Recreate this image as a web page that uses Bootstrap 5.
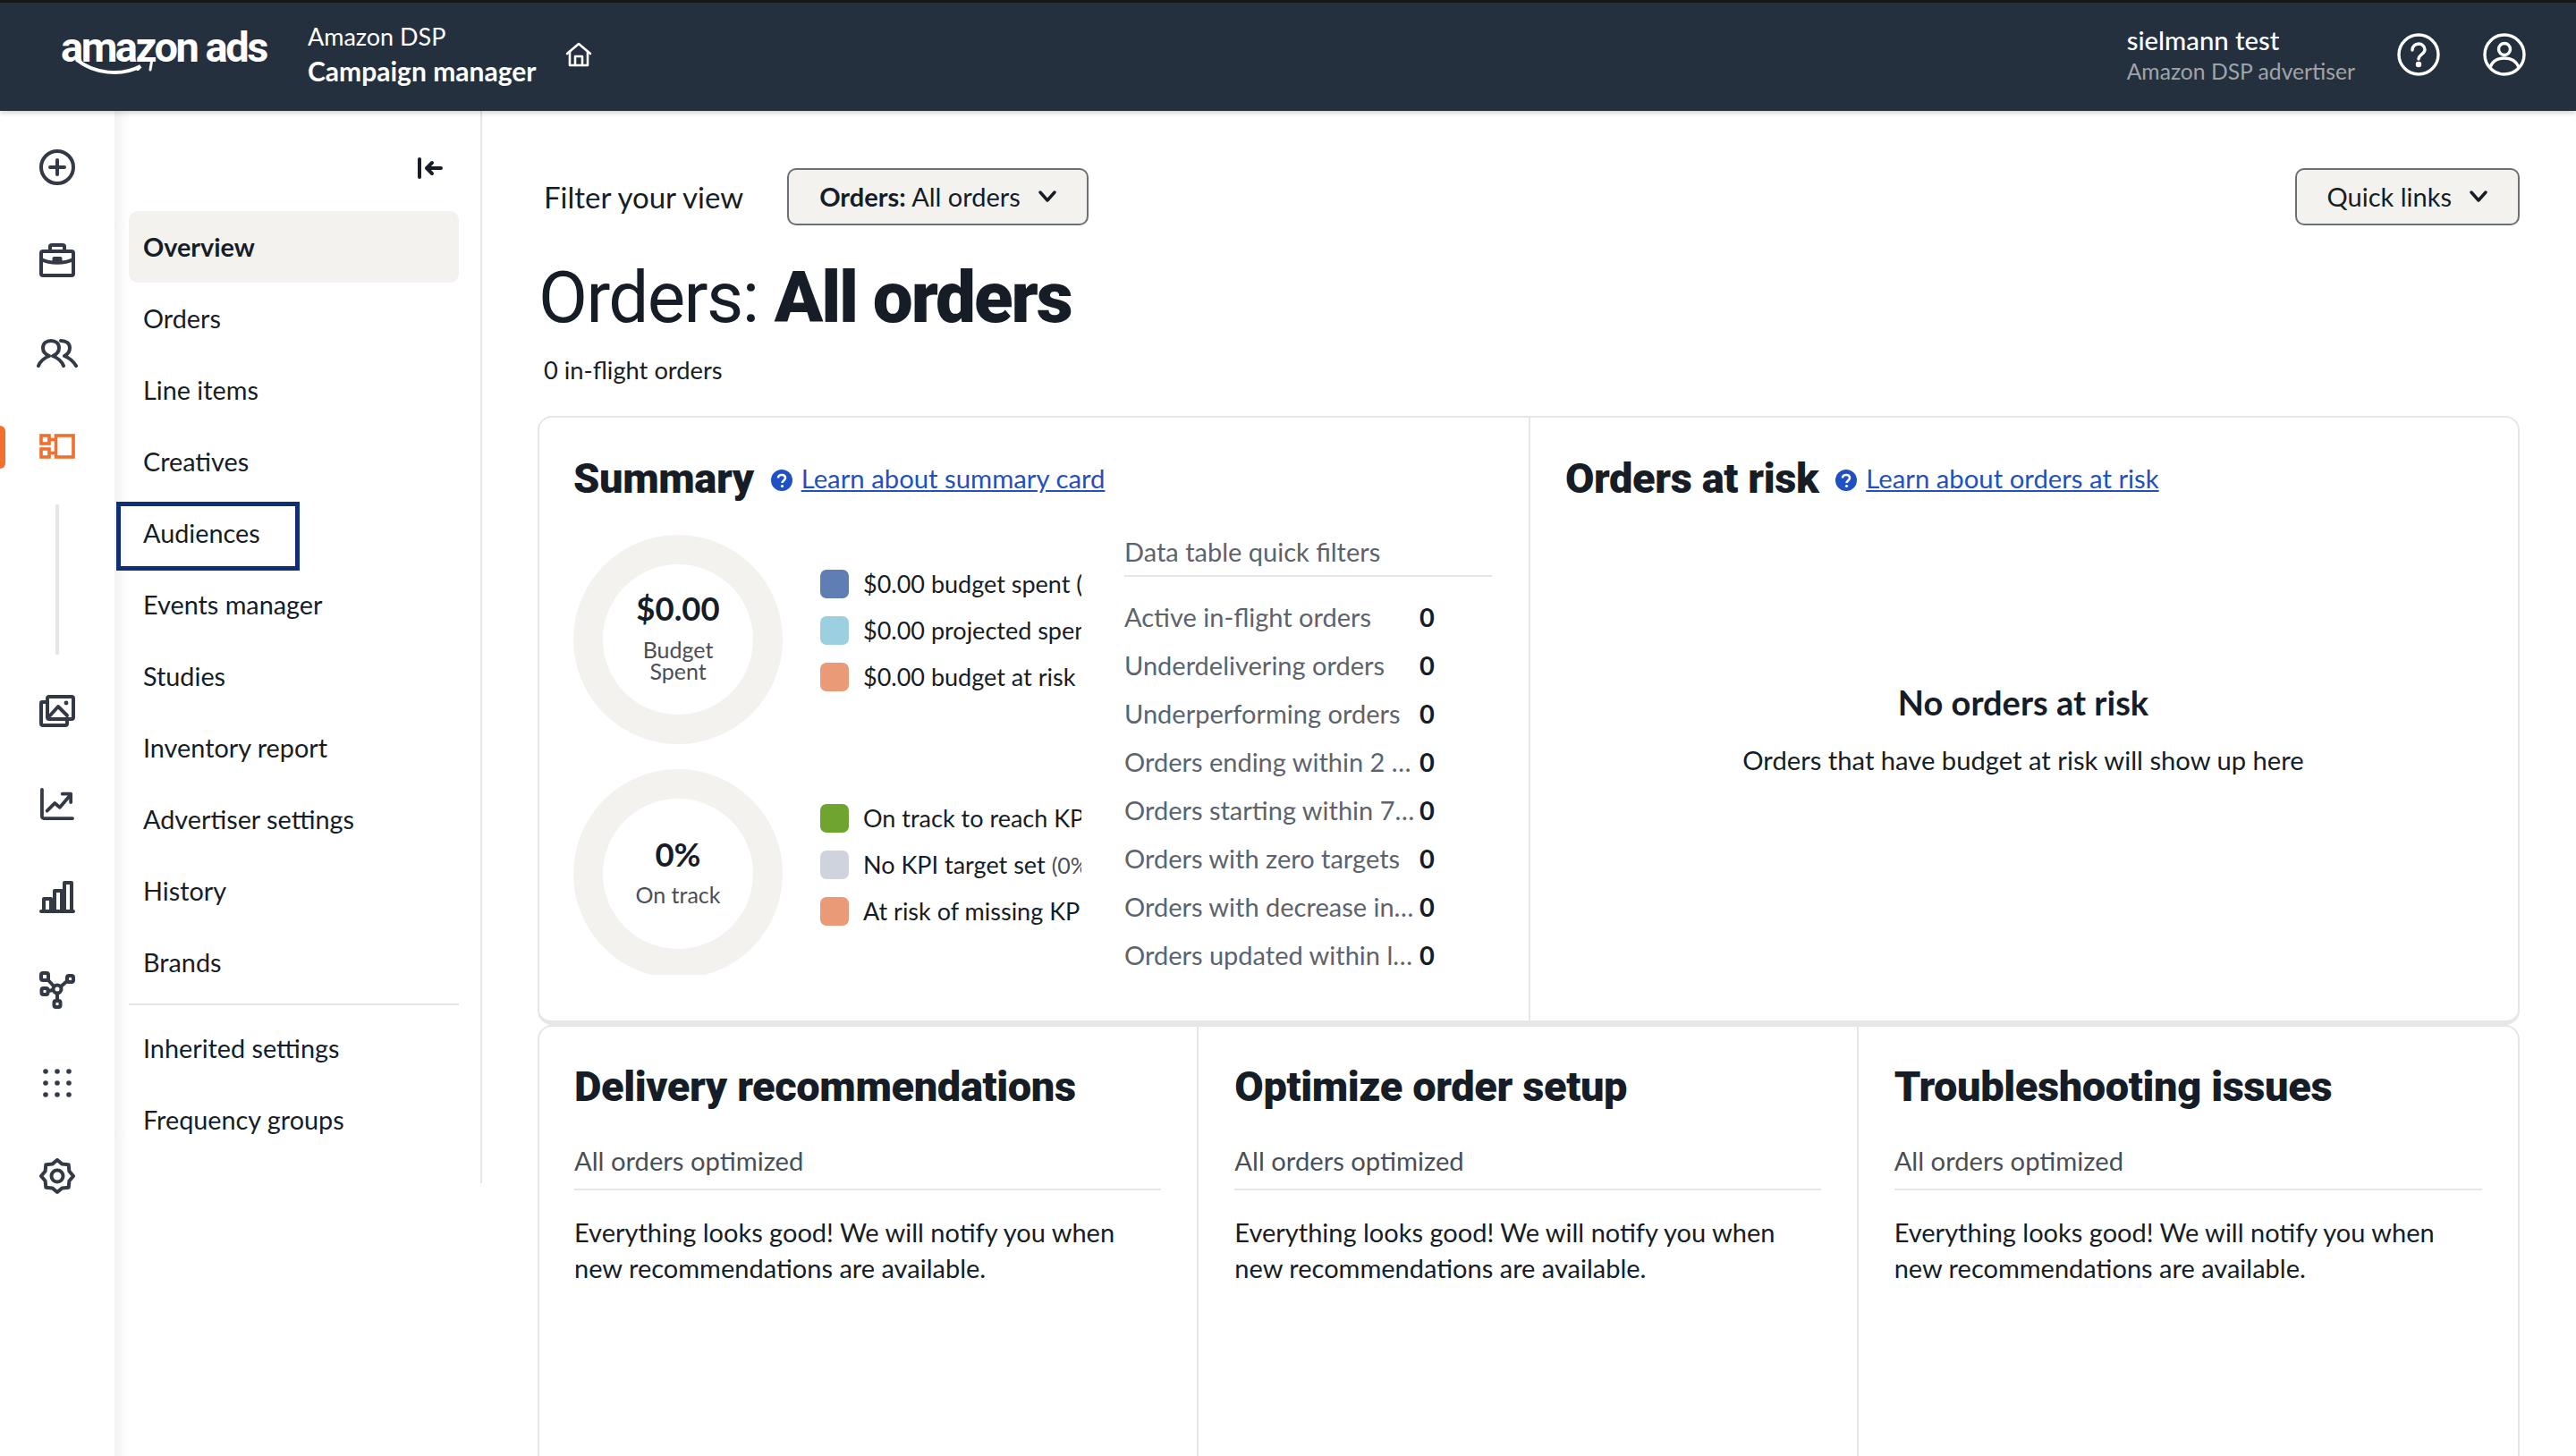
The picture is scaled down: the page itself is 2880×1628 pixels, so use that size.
<!DOCTYPE html>
<html lang="en">
<head>
<meta charset="utf-8">
<title>Campaign manager</title>
<link href="https://cdn.jsdelivr.net/npm/bootstrap@5.3.0/dist/css/bootstrap.min.css" rel="stylesheet">
<script src="https://cdn.jsdelivr.net/npm/bootstrap@5.3.0/dist/js/bootstrap.bundle.min.js"></script>
<style>
html,body{height:1628px;overflow:hidden}
body{font-family:"Lato","Noto Sans",sans-serif;font-size:29px;color:#161d26;background:#fff;line-height:36px}
.topbar{height:124px;background:#25303f;border-top:3px solid #161616;box-shadow:0 2px 6px rgba(0,0,0,.2);position:relative;z-index:3;padding:0 56px 0 68px}
.logo-box{width:231px;margin-top:-10px}
.logo-txt{font-family:"Roboto",sans-serif;font-weight:700;font-size:47px;line-height:46px;letter-spacing:-2.500px;color:#fff;white-space:nowrap;display:block}
.logo-smile{display:block;margin:-12px 0 0 17px}
.app-names{margin-left:45px;color:#fff;line-height:38px;font-size:27px;margin-top:-8px}
.app-names b{font-weight:700;display:block;font-size:30px}
.app-names span{display:block}
.home-ic{margin-left:33px;margin-top:-6px}
.acct{color:#fff;line-height:35px;margin-right:47px;margin-top:-4px}
.acct .nm{display:block;font-size:29.300px;font-weight:500}
.acct .rl{display:block;font-size:24.700px;color:#a0a4aa}
.top-ic{margin-top:-6px}
.shell{height:1504px}
.rail{width:128px;padding-top:11px;position:relative}
.rail-it{height:104px;display:flex;align-items:center;justify-content:center;position:relative}
.rail-act::before{content:"";position:absolute;left:0;top:29px;width:6px;height:48px;background:#f26f2d;border-radius:0 6px 6px 0}
.rail-line{width:4px;height:168px;background:#e6e6e6;margin:13px auto 11px}
.subnav{width:411px;height:1199px;border-right:2px solid #e6e6e6;position:relative;padding:52px 24px 0 16px}
.subnav-fade{background:linear-gradient(90deg,#f2f2f2 0,#fff 16px);width:20px;height:1504px;position:absolute;left:0;top:0}
.coll{height:60px;display:flex;justify-content:flex-end;padding-right:18px;position:relative}
.snav-link{height:80px;display:flex;align-items:center;padding:0 16px;color:#161d26;text-decoration:none;font-size:28.800px;position:relative;border-radius:10px}
.snav-on{background:#f3f2ef;font-weight:700}
.snav-focus::after{content:"";position:absolute;left:-14px;top:5px;width:205px;height:77px;border:5px solid #0f2f75}
.snav-sep{height:2px;background:#e6e6e6;margin:6px 0 8px}
.mainp{padding:64px 63px 0 62px;min-width:0}
.filt-row{padding-left:7px;height:64px}
.filt-lbl{font-size:33px;margin-right:49px}
.dd-btn{height:64px;background:#f3f2ef;border:2px solid #6c6f75;border-radius:10px;color:#161d26;font-size:29px;padding:0 34px 2px;display:flex;align-items:center;gap:20px;line-height:1}
.dd-btn:hover{background:#f3f2ef;color:#161d26;border-color:#6c6f75}
.dd-btn b{font-weight:700}
.pg-title{font-family:"Roboto",sans-serif;font-size:80px;line-height:96px;margin:33px 0 0 1px;font-weight:400;letter-spacing:-1.600px;color:#161d26}
.pg-title b{font-weight:900;letter-spacing:-2.100px}
.pg-sub{margin:15px 0 0 7px;font-size:27.300px}
.panel{border:2px solid #e6e6e6;border-radius:16px;background:#fff}
.panel-a{margin-top:33px;height:681px;border-bottom-width:5px}
.pa-left{width:1108px;border-right:2px solid #e6e6e6;padding:40px 0 0 38px}
.pa-right{padding:40px 0 0 39px}
.sec-h{font-family:"Roboto",sans-serif;font-weight:900;font-size:47px;line-height:56px;letter-spacing:-.4px;margin:0;color:#161d26}
.lnk{color:#1f50c4;font-size:29.300px;text-decoration:underline;margin-left:10px}
.help-b{margin-left:19px;margin-top:3px}
.mx{margin-top:35px;gap:0}
.charts{width:569px}
.chart-row{height:234px;margin-bottom:28px;overflow:hidden;gap:42px}
.chart-row:last-child{height:230px;margin-bottom:0}
.donut{width:234px;height:234px;flex:none;border-radius:50%;border:33px solid #f3f2ef;display:flex;flex-direction:column;align-items:center;text-align:center}
.dn-val{font-weight:700;font-size:36.500px;line-height:44px;margin-top:27px}
.dn-sub{font-size:25px;line-height:24px;color:#4a4f57;margin-top:12px}
.dn-mid{margin-top:40px}
.dn-sub2{margin-top:11px}
.legend{width:292px;margin-top:39px;overflow:hidden}
.lg-it{height:32px;margin-bottom:20px;display:flex;align-items:center;gap:16px;white-space:nowrap;font-size:27px}
.sw{width:32px;height:32px;flex:none;border-radius:7px}
.lg-it small{font-size:25px;color:#4a4f57}
.qf{width:411px;margin-left:47px}
.qf-h{color:#5d636b;height:47px;line-height:38px;border-bottom:2px solid #e6e6e6;margin-bottom:18px;font-size:29px}
.qf-r{height:54px;display:flex;align-items:center;color:#5d636b;font-size:29px}
.qf-l{width:330px;flex:none;white-space:nowrap;overflow:hidden;text-overflow:ellipsis}
.qf-v{color:#161d26;font-weight:700}
.empty{margin-top:202px;text-align:center;padding-right:41px}
.empty h3{font-size:38px;line-height:40px;font-weight:700;margin:0}
.empty p{margin:27px 0 0;font-size:29.200px}
.panel-b{height:600px}
.pb-c{padding:39px 40px 0 40px;border-right:2px solid #e6e6e6}
.pb-c:first-child{padding-left:39px}
.pb-c:last-child{border-right:0}
.pb-sub{margin-top:37px;color:#4a4f57;padding-bottom:13px;border-bottom:2px solid #e6e6e6;font-size:29.200px}
.pb-txt{margin-top:27px;line-height:40px;font-size:29px;padding-right:10px}
</style>
</head>
<body>
<header class="topbar d-flex align-items-center">
  <div class="logo-box">
    <span class="logo-txt">amazon ads</span>
    <svg class="logo-smile" width="88" height="24" viewBox="0 0 88 24"><path d="M1 3C20 18 50 22 72 10L69 13" fill="none" stroke="#fff" stroke-width="4" stroke-linecap="round"/><path d="M74 3L85 2L83 14" fill="none" stroke="#fff" stroke-width="3" stroke-linecap="round"/></svg>
  </div>
  <div class="app-names"><span>Amazon DSP</span><b>Campaign manager</b></div>
  <svg class="home-ic" width="30" height="28" viewBox="0 0 30 28" fill="none" stroke="#fff" stroke-width="2.600" stroke-linejoin="round" stroke-linecap="round"><path d="M2 13L15 2L28 13"/><path d="M5 11V26H25V11"/><path d="M11 26V16H19V26"/></svg>
  <div class="ms-auto acct"><span class="nm">sielmann test</span><span class="rl">Amazon DSP advertiser</span></div>
  <svg class="top-ic" width="48" height="48" viewBox="0 0 48 48" fill="none" stroke="#fff" stroke-width="3.400" stroke-linecap="round"><circle cx="24" cy="24" r="22"/><path d="M17 19c0-4 3-7 7-7s7 3 7 6.500c0 5-7 5.500-7 10.500"/><circle cx="24" cy="35" r="1.500" fill="#fff"/></svg>
  <svg class="top-ic ms-5" width="48" height="48" viewBox="0 0 48 48" fill="none" stroke="#fff" stroke-width="3.400"><circle cx="24" cy="24" r="22"/><circle cx="24" cy="18" r="6.500"/><path d="M8 38c3-7 9-10 16-10s13 3 16 10"/></svg>
</header>

<div class="shell d-flex">
  <nav class="rail flex-shrink-0">
    <div class="rail-it"><svg width="40" height="40" viewBox="0 0 40 40" fill="none" stroke="#343a45" stroke-width="4" stroke-linecap="round"><circle cx="20" cy="20" r="18"/><path d="M20 12V28M12 20H28"/></svg></div>
    <div class="rail-it"><svg width="40" height="38" viewBox="0 0 40 38" fill="none" stroke="#343a45" stroke-width="4" stroke-linejoin="round"><rect x="2" y="9" width="36" height="27" rx="2"/><path d="M12 9V3.500C12 2.500 13 2 14 2H26C27 2 28 2.500 28 3.500V9"/><path d="M2 18C12 23 28 23 38 18"/><rect x="16.500" y="17" width="7" height="3" fill="#343a45"/></svg></div>
    <div class="rail-it"><svg width="46" height="32" viewBox="0 0 46 32" fill="none" stroke="#343a45" stroke-width="4" stroke-linecap="round" stroke-linejoin="round"><path d="M14 19C9 17 7 14 7 10C7 5 11 2 16 2S25 5 25 10C25 14 23 17 18 19C23 21 28 25 30 30M14 19C9 21 4 25 2 30"/><path d="M27 2C33 2 37 5 37 10C37 14 35 17 31 19C36 21 41 25 44 30"/></svg></div>
    <div class="rail-it rail-act"><svg width="40" height="28" viewBox="0 0 40 28" fill="none" stroke="#f26f2d" stroke-width="3.600"><rect x="2" y="2" width="9" height="9"/><rect x="2" y="17" width="9" height="9"/><rect x="18.500" y="2" width="19.500" height="24"/><path d="M11 6.500H18.500M11 21.500H18.500"/></svg></div>
    <div class="rail-line"></div>
    <div class="rail-it"><svg width="40" height="36" viewBox="0 0 40 36" fill="none" stroke="#343a45" stroke-width="4" stroke-linejoin="round" stroke-linecap="round"><rect x="9" y="2" width="29" height="25" rx="2"/><path d="M9 8H3C2.500 8 2 8.500 2 9V32C2 33.500 2.500 34 4 34H29C30 34 31 33.500 31 32V27"/><path d="M12 23L21 13L31 23"/><circle cx="30" cy="9" r="2.400" fill="#343a45" stroke="none"/></svg></div>
    <div class="rail-it"><svg width="40" height="36" viewBox="0 0 40 38" fill="none" stroke="#343a45" stroke-width="4" stroke-linejoin="round" stroke-linecap="round"><path d="M2 2V34C2 35 3 36 4 36H38"/><path d="M8 27L17 18L23 23L35 9"/><path d="M26 7H36V17"/></svg></div>
    <div class="rail-it"><svg width="40" height="36" viewBox="0 0 40 36" fill="none" stroke="#343a45" stroke-width="4" stroke-linejoin="round" stroke-linecap="round"><path d="M2 34H38"/><rect x="5" y="20" width="8" height="14"/><rect x="17" y="11" width="8" height="23"/><rect x="28" y="2" width="8" height="32"/></svg></div>
    <div class="rail-it"><svg width="40" height="42" viewBox="0 0 40 42" fill="none" stroke="#343a45" stroke-width="4" stroke-linejoin="round"><rect x="2" y="2" width="8" height="8" rx="2"/><rect x="31" y="5" width="7" height="7" rx="2"/><rect x="2.500" y="19" width="7" height="7" rx="2"/><rect x="16.500" y="33" width="7" height="7" rx="2"/><circle cx="20" cy="20" r="4.500"/><path d="M9 9L16.500 17M31 11L24 17M10 22L15.500 21M20 25V33"/></svg></div>
    <div class="rail-it"><svg width="32" height="32" viewBox="0 0 32 32" fill="#343a45"><circle cx="3" cy="3" r="2.800"/><circle cx="16" cy="3" r="2.800"/><circle cx="29" cy="3" r="2.800"/><circle cx="3" cy="16" r="2.800"/><circle cx="16" cy="16" r="2.800"/><circle cx="29" cy="16" r="2.800"/><circle cx="3" cy="29" r="2.800"/><circle cx="16" cy="29" r="2.800"/><circle cx="29" cy="29" r="2.800"/></svg></div>
    <div class="rail-it"><svg width="40" height="40" viewBox="0 0 40 40" fill="none" stroke="#343a45" stroke-width="4" stroke-linejoin="round"><polygon points="38,20 33.400,25.550 32.700,32.700 25.550,33.400 20,38 14.450,33.400 7.300,32.700 6.600,25.550 2,20 6.600,14.450 7.300,7.300 14.450,6.600 20,2 25.550,6.600 32.700,7.300 33.400,14.450"/><circle cx="20" cy="20" r="6.500"/></svg></div>
  </nav>

  <aside class="subnav flex-shrink-0">
    <div class="subnav-fade"></div>
    <div class="coll"><svg width="28" height="24" viewBox="0 0 28 24" fill="none" stroke="#161d26" stroke-width="4" stroke-linecap="round" stroke-linejoin="round"><path d="M2 2V22"/><path d="M26 12H10M16 6L10 12L16 18"/></svg></div>
    <div class="d-flex flex-column position-relative">
      <a class="snav-link snav-on" href="#">Overview</a>
      <a class="snav-link" href="#">Orders</a>
      <a class="snav-link" href="#">Line items</a>
      <a class="snav-link" href="#">Creatives</a>
      <a class="snav-link snav-focus" href="#">Audiences</a>
      <a class="snav-link" href="#">Events manager</a>
      <a class="snav-link" href="#">Studies</a>
      <a class="snav-link" href="#">Inventory report</a>
      <a class="snav-link" href="#">Advertiser settings</a>
      <a class="snav-link" href="#">History</a>
      <a class="snav-link" href="#">Brands</a>
      <div class="snav-sep"></div>
      <a class="snav-link" href="#">Inherited settings</a>
      <a class="snav-link" href="#">Frequency groups</a>
    </div>
  </aside>

  <main class="mainp flex-grow-1">
    <div class="filt-row d-flex align-items-center">
      <span class="filt-lbl">Filter your view</span>
      <button class="btn dd-btn"><span><b>Orders:</b> All orders</span><svg width="20" height="13" viewBox="0 0 20 13" fill="none" stroke="#161d26" stroke-width="3.400" stroke-linecap="round" stroke-linejoin="round"><path d="M2 2L10 11L18 2"/></svg></button>
      <button class="btn dd-btn ms-auto"><span>Quick links</span><svg width="20" height="13" viewBox="0 0 20 13" fill="none" stroke="#161d26" stroke-width="3.400" stroke-linecap="round" stroke-linejoin="round"><path d="M2 2L10 11L18 2"/></svg></button>
    </div>
    <h1 class="pg-title">Orders: <b>All orders</b></h1>
    <div class="pg-sub">0 in-flight orders</div>

    <section class="panel panel-a d-flex">
      <div class="pa-left">
        <div class="d-flex align-items-center">
          <h2 class="sec-h">Summary</h2>
          <svg class="help-b" width="24" height="24" viewBox="0 0 24 24"><circle cx="12" cy="12" r="12" fill="#1f50c4"/><path d="M8 9.500C8 7 10 6 12 6S16 7 16 9.500C16 12 12.500 12.500 12.500 15" fill="none" stroke="#fff" stroke-width="2.600"/><circle cx="12.500" cy="18.500" r="1.600" fill="#fff"/></svg>
          <a class="lnk" href="#">Learn about summary card</a>
        </div>
        <div class="d-flex mx">
          <div class="charts">
            <div class="chart-row d-flex">
              <div class="donut"><div class="dn-val">$0.00</div><div class="dn-sub">Budget<br>Spent</div></div>
              <div class="legend">
                <div class="lg-it"><span class="sw" style="background:#5f7eb3"></span><span>$0.00 budget spent (0%)</span></div>
                <div class="lg-it"><span class="sw" style="background:#9ccfe0"></span><span>$0.00 projected spend (0%)</span></div>
                <div class="lg-it"><span class="sw" style="background:#ea9a76"></span><span>$0.00 budget at risk</span></div>
              </div>
            </div>
            <div class="chart-row d-flex">
              <div class="donut"><div class="dn-val dn-mid">0%</div><div class="dn-sub dn-sub2">On track</div></div>
              <div class="legend">
                <div class="lg-it"><span class="sw" style="background:#6fa52f"></span><span>On track to reach KPI</span></div>
                <div class="lg-it"><span class="sw" style="background:#cfd3dd"></span><span>No KPI target set <small>(0%)</small></span></div>
                <div class="lg-it"><span class="sw" style="background:#ea9a76"></span><span>At risk of missing KPI</span></div>
              </div>
            </div>
          </div>
          <div class="qf">
            <div class="qf-h">Data table quick filters</div>
            <div class="qf-r"><span class="qf-l">Active in-flight orders</span><span class="qf-v">0</span></div>
            <div class="qf-r"><span class="qf-l">Underdelivering orders</span><span class="qf-v">0</span></div>
            <div class="qf-r"><span class="qf-l">Underperforming orders</span><span class="qf-v">0</span></div>
            <div class="qf-r"><span class="qf-l">Orders ending within 2 days</span><span class="qf-v">0</span></div>
            <div class="qf-r"><span class="qf-l">Orders starting within 7 days</span><span class="qf-v">0</span></div>
            <div class="qf-r"><span class="qf-l">Orders with zero targets</span><span class="qf-v">0</span></div>
            <div class="qf-r"><span class="qf-l">Orders with decrease in performance</span><span class="qf-v">0</span></div>
            <div class="qf-r"><span class="qf-l">Orders updated within last 24 hours</span><span class="qf-v">0</span></div>
          </div>
        </div>
      </div>
      <div class="pa-right flex-grow-1">
        <div class="d-flex align-items-center">
          <h2 class="sec-h">Orders at risk</h2>
          <svg class="help-b" width="24" height="24" viewBox="0 0 24 24"><circle cx="12" cy="12" r="12" fill="#1f50c4"/><path d="M8 9.500C8 7 10 6 12 6S16 7 16 9.500C16 12 12.500 12.500 12.500 15" fill="none" stroke="#fff" stroke-width="2.600"/><circle cx="12.500" cy="18.500" r="1.600" fill="#fff"/></svg>
          <a class="lnk" href="#">Learn about orders at risk</a>
        </div>
        <div class="empty">
          <h3>No orders at risk</h3>
          <p>Orders that have budget at risk will show up here</p>
        </div>
      </div>
    </section>

    <section class="panel panel-b row g-0">
      <div class="col-4 pb-c">
        <h2 class="sec-h">Delivery recommendations</h2>
        <div class="pb-sub">All orders optimized</div>
        <div class="pb-txt">Everything looks good! We will notify you when new recommendations are available.</div>
      </div>
      <div class="col-4 pb-c">
        <h2 class="sec-h">Optimize order setup</h2>
        <div class="pb-sub">All orders optimized</div>
        <div class="pb-txt">Everything looks good! We will notify you when new recommendations are available.</div>
      </div>
      <div class="col-4 pb-c">
        <h2 class="sec-h">Troubleshooting issues</h2>
        <div class="pb-sub">All orders optimized</div>
        <div class="pb-txt">Everything looks good! We will notify you when new recommendations are available.</div>
      </div>
    </section>
  </main>
</div>
</body>
</html>
